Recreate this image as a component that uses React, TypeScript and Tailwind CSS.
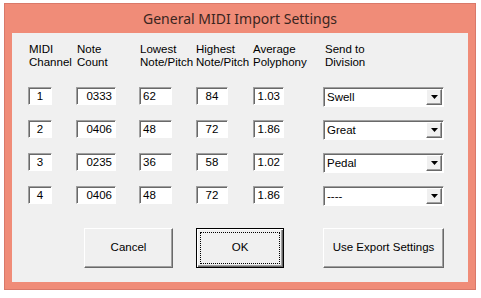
const rows = [
  { ch: "1", count: "0333", low: "62", high: "84", avg: "1.03", div: "Swell" },
  { ch: "2", count: "0406", low: "48", high: "72", avg: "1.86", div: "Great" },
  { ch: "3", count: "0235", low: "36", high: "58", avg: "1.02", div: "Pedal" },
  { ch: "4", count: "0406", low: "48", high: "72", avg: "1.86", div: "----" },
];

function Edit({ value, w, align }: { value: string; w: string; align: string }) {
  return (
    <div
      className={`${w} ${align} h-[18px] bg-white border border-t-[#a0a0a0] border-l-[#a0a0a0] border-b-white border-r-white shadow-[inset_1px_1px_0_#696969] px-[3px] pt-[1px] text-[11.5px] leading-[15px] text-black`}
    >
      {value}
    </div>
  );
}

function Combo({ value }: { value: string }) {
  return (
    <div className="flex h-[20px] w-[121px] items-stretch bg-white border border-t-[#a0a0a0] border-l-[#a0a0a0] border-b-white border-r-white shadow-[inset_1px_1px_0_#696969]">
      <div className="flex-1 pl-[3px] pt-[2px] text-[11.5px] leading-[15px] text-black">{value}</div>
      <div className="my-[1px] mr-[1px] flex w-[16px] items-center justify-center bg-[#f0f0f0] border border-t-white border-l-white border-b-[#696969] border-r-[#696969] shadow-[inset_-1px_-1px_0_#a0a0a0]">
        <svg width="7" height="4" viewBox="0 0 7 4">
          <path d="M0 0h7L3.5 4z" fill="#000" />
        </svg>
      </div>
    </div>
  );
}

function Button({ label, w, focused }: { label: string; w: string; focused?: boolean }) {
  return (
    <div
      className={`${w} h-[40px] flex items-center justify-center bg-[#f0f0f0] border ${
        focused
          ? "border-black shadow-[inset_1px_1px_0_#fff,inset_-1px_-1px_0_#696969,inset_-2px_-2px_0_#a0a0a0]"
          : "border-t-white border-l-white border-b-[#696969] border-r-[#696969] shadow-[inset_-1px_-1px_0_#a0a0a0]"
      } p-[3px] text-[11.5px] text-black`}
    >
      <div
        className={`flex h-full w-full items-center justify-center ${
          focused ? "border border-dotted border-black" : ""
        }`}
      >
        {label}
      </div>
    </div>
  );
}

export default function App() {
  return (
    <div className="h-[298px] w-[481px] bg-white pl-[4px] pt-[3px] font-['Liberation_Sans',Arial,sans-serif]">
      <div className="flex h-[287px] w-[472px] flex-col border border-[#d9796a] bg-[#f08c78]">
        <div className="flex h-[29px] items-center justify-center font-['Noto_Sans',sans-serif] text-[14px] text-[#3a2520]">
          General MIDI Import Settings
        </div>
        <div className="mx-[7px] h-[249px] bg-[#f0f0f0] pl-[16px] pt-[10px]">
          <div className="grid grid-cols-[48px_63px_57px_57px_70px_121px] text-[11.5px] leading-[13px] text-black">
            <div className="pl-[1px]">MIDI<br />Channel</div>
            <div className="pl-[1px]">Note<br />Count</div>
            <div className="pl-[1px] whitespace-nowrap overflow-hidden w-[54px]">Lowest<br />Note/Pitch</div>
            <div className="pl-[0px] whitespace-nowrap">Highest<br />Note/Pitch</div>
            <div className="pl-[0px]">Average<br />Polyphony</div>
            <div className="pl-[2px]">Send to<br />Division</div>
          </div>
          <div className="mt-[18px] flex flex-col gap-[14px]">
            {rows.map((r) => (
              <div key={r.ch} className="grid h-[19px] grid-cols-[48px_63px_57px_57px_70px_121px] items-start">
                <Edit value={r.ch} w="w-[24px]" align="text-center" />
                <Edit value={r.count} w="w-[40px]" align="text-right" />
                <Edit value={r.low} w="w-[33px]" align="text-left" />
                <Edit value={r.high} w="w-[32px]" align="text-center" />
                <Edit value={r.avg} w="w-[31px]" align="text-right" />
                <Combo value={r.div} />
              </div>
            ))}
          </div>
          <div className="mt-[23px] flex">
            <div className="ml-[56px]">
              <Button label="Cancel" w="w-[89px]" />
            </div>
            <div className="ml-[23px]">
              <Button label="OK" w="w-[88px]" focused />
            </div>
            <div className="ml-[39px]">
              <Button label="Use Export Settings" w="w-[121px]" />
            </div>
          </div>
        </div>
      </div>
    </div>
  );
}
